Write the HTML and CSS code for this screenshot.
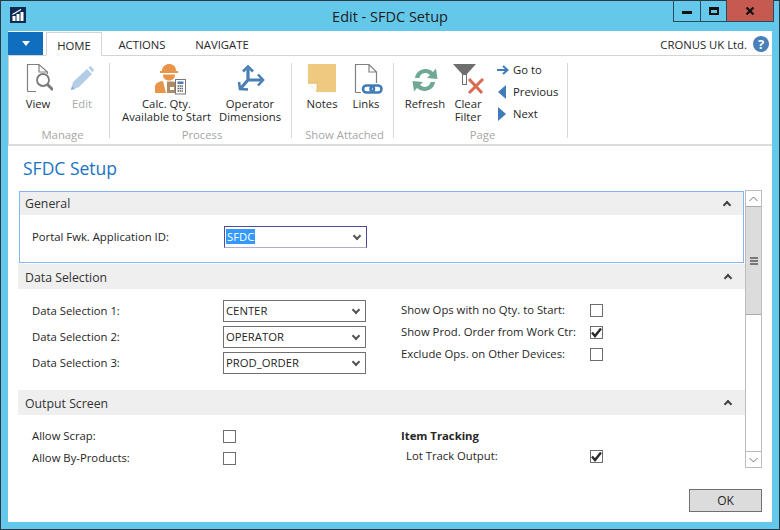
FILE: index.html
```html
<!DOCTYPE html>
<html lang="en">
<head>
  <meta charset="UTF-8"/>
  <title>Edit - SFDC Setup</title>
  <link rel="stylesheet" href="styles.css">
</head>
<body>
<div class="window">
  <div class="titlebar">
    <div class="app-logo">
      <svg width="16" height="16" viewBox="0 0 16 16"><rect width="16" height="16" fill="#0e2a52"/><rect x="2.500" y="9" width="3" height="5" fill="#fff"/><rect x="6.500" y="7" width="3" height="7" fill="#fff"/><rect x="10.500" y="5" width="3" height="9" fill="#fff"/><path d="M2.500 7.500 L11 2.500" stroke="#fff" stroke-width="1.200" fill="none"/></svg>
    </div>
    <div class="title">Edit - SFDC Setup</div>
    <div class="controls">
      <div class="ctl ctl-min"><span class="min-glyph"></span></div>
      <div class="ctl ctl-max"><span class="max-glyph"></span></div>
      <div class="ctl ctl-close">
        <svg width="10" height="8" viewBox="0 0 10 8"><path d="M1.500 .5 L8.500 7.500 M8.500 .5 L1.500 7.500" stroke="#111" stroke-width="2.200"/></svg>
      </div>
    </div>
  </div>

  <div class="client">
    <div class="tabrow">
      <div class="app-menu"><span class="app-menu-arrow"></span></div>
      <div class="tab active">HOME</div>
      <div class="tab">ACTIONS</div>
      <div class="tab">NAVIGATE</div>
      <div class="company">CRONUS UK Ltd.</div>
      <div class="help">?</div>
    </div>

    <div class="ribbon">
      <div class="group group-manage">
        <div class="group-btns">
          <div class="rbtn w44">
            <svg class="ico" width="30" height="32" viewBox="0 0 30 32"><path d="M4.500 28.500 V1.500 H16 L24.500 9 V11 M16 1.500 V9 H24.500 M4.500 28.500 H13" fill="none" stroke="#808080" stroke-width="1.200"/><circle cx="20" cy="17" r="6" fill="#fff" stroke="#7a7a7a" stroke-width="1.800"/><path d="M24.500 21.500 L30 27" stroke="#7a7a7a" stroke-width="3"/></svg>
            <span>View</span>
          </div>
          <div class="rbtn w44 off">
            <svg class="ico" width="30" height="32" viewBox="0 0 30 32"><path d="M4 27 L6 19 L20 6 L25 11 L12 24 Z" fill="#b3cde6"/><path d="M21.500 4.500 L23.500 3 L27 6.500 L25.500 9.500 Z" fill="#b3cde6"/><path d="M4 27 L5 23 L8 26 Z" fill="#8fb0d2"/></svg>
            <span>Edit</span>
          </div>
        </div>
        <div class="caption">Manage</div>
      </div>

      <div class="group group-process">
        <div class="group-btns">
          <div class="rbtn w90">
            <svg class="ico" width="38" height="32" viewBox="-7 0 38 32"><path d="M7 8 C7 3 11 1 14 1 C18 1 21 3 21 8 H23 V10 H5 V8 Z" fill="#e8954a"/><path d="M8 11.500 H20 C20 15 18 17.500 14 17.500 C10 17.500 8 15 8 11.500 Z" fill="#e8954a"/><path d="M0 30 V24 C0 20 4 18.500 8 18 L11 30 Z" fill="#e8954a"/><path d="M12 18.500 H17 C19 18.500 20.500 19 21 20 V30 H12 Z" fill="#b08a64"/><rect x="15" y="24" width="4" height="3" fill="#fff"/><rect x="20.500" y="16.500" width="10" height="14.500" fill="#fff" stroke="#777" stroke-width="1"/><rect x="22.500" y="18.500" width="6" height="2.500" fill="#4a7fb5"/><path d="M22.500 23 h1.500 m.5 0 h1.500 m.5 0 h1.500 M22.500 25.500 h1.500 m.5 0 h1.500 m.5 0 h1.500 M22.500 28 h1.500 m.5 0 h1.500 m.5 0 h1.500" stroke="#666" stroke-width="1.300"/></svg>
            <span>Calc. Qty.<br>Available to Start</span>
          </div>
          <div class="rbtn w66">
            <svg class="ico" width="30" height="32" viewBox="0 0 30 32"><path d="M13 17 V6 M13 17 L26 17 M13 17 L6 25" fill="none" stroke="#4a7fb5" stroke-width="3.200"/><path d="M8 8.500 L13 3.500 L18 8.500 M23 11.500 L28 17 L23 22.500 M4 19 L5 26 L13 26.500" fill="none" stroke="#4a7fb5" stroke-width="2.600"/></svg>
            <span>Operator<br>Dimensions</span>
          </div>
        </div>
        <div class="caption">Process</div>
      </div>

      <div class="group group-attached">
        <div class="group-btns">
          <div class="rbtn w44">
            <svg class="ico" width="30" height="32" viewBox="0 0 30 32"><path d="M1 1 H29 V29 H10 L1 20 Z" fill="#eec97f"/><path d="M1.500 20.500 H10 V28.500 Z" fill="#fff"/><path d="M1 20 H10 V29" fill="none" stroke="#d9b76f" stroke-width=".8"/></svg>
            <span>Notes</span>
          </div>
          <div class="rbtn w44">
            <svg class="ico" width="34" height="32" viewBox="0 0 34 32"><path d="M6.500 29.500 V1.500 H20 L27.500 9 V20 M20 1.500 V9 H27.500 M6.500 29.500 H12" fill="none" stroke="#808080" stroke-width="1.200"/><rect x="14" y="22.500" width="11" height="7" rx="3.500" fill="none" stroke="#3f7cb8" stroke-width="2.600"/><rect x="21.500" y="22.500" width="11" height="7" rx="3.500" fill="none" stroke="#3f7cb8" stroke-width="2.600"/></svg>
            <span>Links</span>
          </div>
        </div>
        <div class="caption">Show Attached</div>
      </div>

      <div class="group group-page">
        <div class="group-btns">
          <div class="rbtn w48">
            <svg class="ico" width="30" height="32" viewBox="0 0 30 32"><path d="M5 15 C6 7 16 3 23 9 L26 5.500 L27.500 16 L17 15 L20 12 C15 8 10 11 9.500 15 Z" fill="#6fa894"/><path d="M25 19 C24 27 14 31 7 25 L4 28.500 L2.500 18 L13 19 L10 22 C15 26 20 23 20.500 19 Z" fill="#6fa894"/></svg>
            <span>Refresh</span>
          </div>
          <div class="rbtn w40">
            <svg class="ico" width="36" height="32" viewBox="0 0 36 32"><path d="M3 1 H26 L17 11 V22 L12 22 V11 Z" fill="#6e6e6e"/><path d="M13 12 V21 H16 V12 Z" fill="#fff"/><path d="M19 16 L32 30 M33 16 L19 30" stroke="#d9694f" stroke-width="3"/></svg>
            <span>Clear<br>Filter</span>
          </div>
          <div class="nav-list">
            <div class="nav-item"><svg width="14" height="14" viewBox="0 0 14 14"><path d="M1 7 H11 M7 3 L11.500 7 L7 11" fill="none" stroke="#3f7cb8" stroke-width="2"/></svg><span>Go to</span></div>
            <div class="nav-item"><svg width="14" height="14" viewBox="0 0 14 14"><path d="M10 0 V14 L2 7 Z" fill="#3f7cb8"/></svg><span>Previous</span></div>
            <div class="nav-item"><svg width="14" height="14" viewBox="0 0 14 14"><path d="M2 0 V14 L10 7 Z" fill="#3f7cb8"/></svg><span>Next</span></div>
          </div>
        </div>
        <div class="caption">Page</div>
      </div>
    </div>

    <h1 class="page-title">SFDC Setup</h1>

    <div class="scroll-wrap">
      <div class="form">
        <section class="sec sec-focus">
          <div class="sec-head"><span>General</span><span class="caret"></span></div>
          <div class="sec-body sec-body-general">
            <div class="field">
              <label>Portal Fwk. Application ID:</label>
              <div class="select select-focus"><span class="sel-text">SFDC</span><span class="sel-arrow"></span></div>
            </div>
          </div>
        </section>

        <section class="sec">
          <div class="sec-head"><span>Data Selection</span><span class="caret"></span></div>
          <div class="sec-body sec-body-data cols">
            <div class="col-left stack-26">
              <div class="field"><label>Data Selection 1:</label><div class="select"><span>CENTER</span><span class="sel-arrow"></span></div></div>
              <div class="field"><label>Data Selection 2:</label><div class="select"><span>OPERATOR</span><span class="sel-arrow"></span></div></div>
              <div class="field"><label>Data Selection 3:</label><div class="select"><span>PROD_ORDER</span><span class="sel-arrow"></span></div></div>
            </div>
            <div class="col-right col-up">
              <div class="check-row"><label>Show Ops with no Qty. to Start:</label><span class="check"></span></div>
              <div class="check-row"><label>Show Prod. Order from Work Ctr:</label><span class="check on"><svg width="11" height="11" viewBox="0 0 11 11"><path d="M1 5.500 L4 9 L10 1.500" fill="none" stroke="#2b2b2b" stroke-width="2.400"/></svg></span></div>
              <div class="check-row"><label>Exclude Ops. on Other Devices:</label><span class="check"></span></div>
            </div>
          </div>
        </section>

        <section class="sec">
          <div class="sec-head"><span>Output Screen</span><span class="caret"></span></div>
          <div class="sec-body cols">
            <div class="col-left">
              <div class="check-row"><label class="left-label">Allow Scrap:</label><span class="check"></span></div>
              <div class="check-row"><label class="left-label">Allow By-Products:</label><span class="check"></span></div>
            </div>
            <div class="col-right">
              <div class="group-label">Item Tracking</div>
              <div class="check-row indent"><label>Lot Track Output:</label><span class="check on"><svg width="11" height="11" viewBox="0 0 11 11"><path d="M1 5.500 L4 9 L10 1.500" fill="none" stroke="#2b2b2b" stroke-width="2.400"/></svg></span></div>
            </div>
          </div>
        </section>
      </div>

      <div class="scrollbar">
        <div class="sb-btn"><svg width="9" height="6" viewBox="0 0 9 6"><path d="M.5 5 L4.500 1 L8.500 5" fill="none" stroke="#777" stroke-width="1"/></svg></div>
        <div class="sb-thumb"><span class="grip"></span></div>
        <div class="sb-track"></div>
        <div class="sb-btn sb-btn-down"><svg width="9" height="6" viewBox="0 0 9 6"><path d="M.5 1 L4.500 5 L8.500 1" fill="none" stroke="#777" stroke-width="1"/></svg></div>
      </div>
    </div>

    <div class="footer"><button class="ok">OK</button></div>
  </div>
</div>
</body>
</html>
```

FILE: styles.css
```css
*{margin:0;padding:0;box-sizing:border-box;}
html,body{width:780px;height:530px;overflow:hidden;background:#64c8ea;}
body{font-family:"Open Sans","Noto Sans",sans-serif;font-size:11.3px;color:#262626;}

.window{width:780px;height:530px;display:flex;flex-direction:column;border:1px solid #2b3a42;background:#64c8ea;padding:0 7px 7px 7px;}

/* title bar */
.titlebar{height:30px;flex:none;display:flex;position:relative;}
.app-logo{margin:6px 0 0 2px;height:16px;}
.title{position:absolute;left:0;right:0;top:6px;text-align:center;font-size:14.5px;color:#1c1c1c;}
.controls{position:absolute;right:-2px;top:-1px;height:22px;display:flex;border:1px solid #2b4a5e;border-top:0;}
.ctl{display:flex;align-items:center;justify-content:center;height:21px;}
.ctl-min{width:27px;border-right:1px solid #2b4a5e;}
.ctl-max{width:26px;border-right:1px solid #2b4a5e;}
.ctl-close{width:46px;background:#c75a50;}
.min-glyph{width:10px;height:3px;background:#111;margin-top:4px;}
.max-glyph{width:10px;height:8px;border:2px solid #111;border-top-width:3px;}

.client{flex:1;background:#fff;display:flex;flex-direction:column;min-height:0;}

/* tabs */
.tabrow{height:25px;flex:none;display:flex;align-items:stretch;position:relative;border-bottom:1px solid #d4d4d4;}
.app-menu{width:35px;height:23px;margin-top:1px;background:#106ebe;display:flex;align-items:center;justify-content:center;}
.app-menu-arrow{width:0;height:0;border-left:4.5px solid transparent;border-right:4.5px solid transparent;border-top:5px solid #fff;}
.tab{display:flex;align-items:center;justify-content:center;padding-top:2px;color:#262626;}
.tab.active{width:56px;margin:1px 0 -1px 3px;background:#fff;border:1px solid #d4d4d4;border-bottom:1px solid #fff;}
.tab:nth-child(3){width:72px;margin-left:4px;}
.tab:nth-child(4){width:82px;margin-left:3px;}
.company{margin-left:auto;align-self:center;padding-top:3px;}
.help{width:16px;height:16px;border-radius:50%;background:#4a80b8;color:#fff;font-weight:700;font-size:13px;line-height:16px;text-align:center;margin:5px 3px 0 6px;}

/* ribbon */
.ribbon{height:90px;flex:none;display:flex;border-bottom:2px solid #dcdcdc;padding-top:7px;border-left:1px solid #d4d4d4;}
.group{display:flex;flex-direction:column;height:75px;border-right:1px solid #d8d8d8;}
.group-manage{width:101px;padding-left:7px;}
.group-process{width:182px;padding-left:11px;}
.group-attached{width:102px;padding-left:8px;}
.group-page{width:174px;padding-left:8px;}
.group-btns{display:flex;flex:1;}
.rbtn{display:flex;flex-direction:column;align-items:center;text-align:center;line-height:13px;}
.rbtn .ico{flex:none;margin-bottom:2px;}
.w44{width:44px;}
.w48{width:46px;}
.w40{width:40px;}
.w90{width:91px;}
.w66{width:66px;margin-left:5px;}
.off{color:#a8a8a8;}
.caption{text-align:center;color:#a6a6a6;line-height:15px;margin-bottom:-4px;}
.group-process .caption{margin-left:-8px;}
.group-attached .caption,.group-page .caption{margin-left:-4px;}
.nav-list{display:flex;flex-direction:column;gap:7px;margin:-1px 0 0 8px;}
.nav-item{display:flex;align-items:center;gap:3px;height:15px;}

.page-title{font-size:17.5px;font-weight:400;color:#1a73c4;margin:10px 0 0 15px;line-height:24px;height:24px;flex:none;}

/* form */
.scroll-wrap{margin:10px 10px 0 10px;height:278px;flex:none;display:flex;}
.form{width:727px;height:277px;overflow:hidden;flex:none;}
.sec-focus{border:1px solid #85b4f8;margin:1px;}
.sec-head{height:25px;background:#efefef;display:flex;align-items:center;justify-content:space-between;padding:1px 14px 0 7px;font-size:12.3px;color:#333;}
.sec-focus .sec-head{height:23px;padding:0 13px 0 5px;}
.caret{width:6px;height:6px;border-left:2px solid #444;border-top:2px solid #444;transform:rotate(45deg);margin-top:2px;}
.sec-body{padding:10px 0 15px 14px;}
.sec-body-general{padding:11px 0 0 12px;height:47px;}
.sec-body-data{padding:11px 0 16px 14px;}
.field{display:flex;align-items:center;height:22px;}
.field label,.left-label{width:191px;flex:none;padding-bottom:1px;}
.sec-focus .field label{width:192px;}
.select{width:143px;height:22px;border:1px solid #707070;display:flex;align-items:center;justify-content:space-between;padding:0 6px 1px 2px;}
.select-focus{border-color:#4d4d9a;border-bottom-color:#b0aed0;padding-left:1px;}
.sel-text{background:#3399ff;color:#fff;padding:0 1px;line-height:15px;}
.sel-arrow{width:6px;height:6px;border-right:2px solid #555;border-bottom:2px solid #555;transform:rotate(45deg);margin-top:-2px;}

.cols{display:flex;}
.col-left{width:369px;flex:none;}
.stack-26{display:flex;flex-direction:column;gap:4px;}
.col-right{width:220px;display:flex;flex-direction:column;}
.col-up{margin-top:-1px;}
.check-row{display:flex;align-items:center;height:22px;}
.check-row label{flex:none;padding-bottom:1px;}
.col-right .check-row label{width:189px;}
.col-right .check-row.indent label{width:184px;}
.indent{padding-left:5px;height:20px;}
.check{width:13px;height:13px;border:1px solid #6d6d6d;display:flex;align-items:center;justify-content:center;background:#fff;}
.group-label{font-weight:700;height:21px;line-height:21px;color:#262626;}

/* scrollbar */
.scrollbar{width:17px;height:278px;border:1px solid #bcbcbc;display:flex;flex-direction:column;flex:none;}
.sb-btn{height:15px;flex:none;display:flex;align-items:center;justify-content:center;}
.sb-btn-down{border-top:1px solid #bcbcbc;height:16px;}
.sb-thumb{height:109px;flex:none;background:#dcdcdc;border:1px solid #aaa;border-width:1px 0;display:flex;align-items:center;justify-content:center;}
.grip{width:8px;height:8px;border-top:2px solid #777;border-bottom:2px solid #777;background:linear-gradient(#777,#777) center/100% 2px no-repeat;}
.sb-track{flex:1;}

.footer{flex:1;display:flex;justify-content:flex-end;align-items:flex-start;padding:21px 10px 0 0;}
.ok{width:73px;height:23px;background:#dcdcdc;border:1px solid #707070;font:inherit;font-size:12px;color:#262626;}
```
